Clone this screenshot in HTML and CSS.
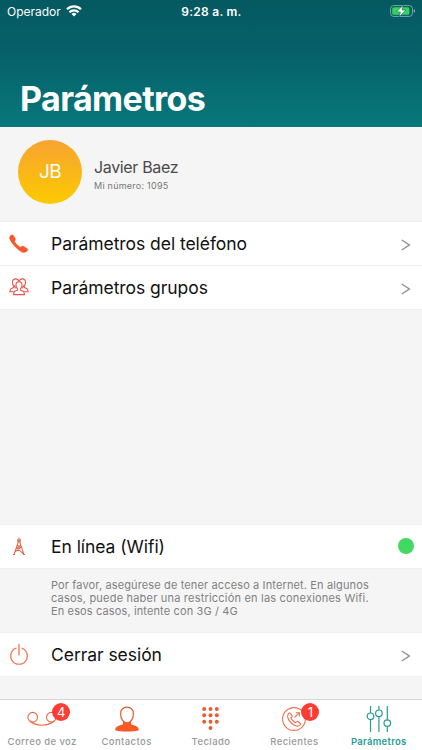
FILE: index.html
```html
<!doctype html>
<html lang="es">
  <head>
    <meta charset="UTF-8" />
    <meta name="viewport" content="width=device-width, initial-scale=1" />
    <title>Parámetros</title>
    <link rel="stylesheet" href="styles.css">
  </head>

  <body>
    <header class="header">
      <div class="status">
        <span class="carrier">
          <span class="carrier-name">Operador</span>
          <svg class="wifi" width="16" height="12" viewBox="0 0 16 12" fill="none" stroke="#fff" stroke-width="2.3">
            <path d="M1 4.3a10 10 0 0 1 14 0" />
            <path d="M3.4 7.300a6.600 6.600 0 0 1 9.200 0" />
            <path d="M8 11.500l-2.500-2.500a3.500 3.500 0 0 1 5 0z" fill="#fff" stroke="none" />
          </svg>
        </span>
        <span class="clock">9:28 a. m.</span>
        <svg class="battery" width="26" height="12" viewBox="0 0 26 12">
          <rect x=".6" y=".6" width="21.8" height="10.8" rx="3" fill="none" stroke="#78a8aa" />
          <path d="M23.7 4v4q1.5-.7 1.5-2t-1.5-2z" fill="#78a8aa" />
          <rect x="2.2" y="2.2" width="17.2" height="7.6" rx="1.5" fill="#36d35b" />
          <path d="M13.2.1L6.500 6.900h3.900L9.200 11.900l6.700-6.900h-3.900z" fill="#fff" stroke="#08636a" stroke-width=".6" />
        </svg>
      </div>
      <h1 class="title">Parámetros</h1>
    </header>

    <main class="content">
      <section class="profile">
        <div class="avatar">JB</div>
        <div>
          <div class="name">Javier Baez</div>
          <div class="number">Mi número: 1095</div>
        </div>
      </section>

      <div class="row">
        <svg class="row-icon" width="20" height="20" viewBox="0 0 20 20">
          <path d="M1 2.200Q2 .8 3.300.9q.8 0 1.500 1.100l1.500 2.700q.5 1-.3 1.900l-.6.8q2.200 3.600 5.900 5.900l1.300-.9q.8-.6 1.700-.1l3.800 2.300q1.200.8.5 1.800-1.500 2.200-4 2.100Q12 18.300 6.400 12.900 1.300 7.700.6 4.200.5 3 1 2.200z" fill="#f4582b" stroke="#f4582b" stroke-width=".5" />
        </svg>
        <span class="label">Parámetros del teléfono</span>
        <svg class="chevron" width="10" height="12" viewBox="0 0 10 12"><path d="M.8 1l7.500 5-7.500 5" /></svg>
      </div>
      <div class="row row-groups">
        <svg class="row-icon" width="20" height="18" viewBox="0 0 20 18" fill="none" stroke="#ec5148" stroke-width="1.100">
          <path d="M10 3.700c2.100 0 3.100 1.500 3 3.300 0 1.800-.7 3-1.500 3.800v1.400l2.800 1.100q1 .6 1.100 3.300H4.600q.1-2.700 1.100-3.300l2.800-1.100v-1.400C7.700 10 7 8.800 7 7c-.1-1.800.9-3.300 3-3.300z" />
          <path d="M9.800 3.500C9.300 1.700 8.200.9 6.700.9 4.500.9 3.400 2.400 3.500 4.500c0 1.600.5 2.700 1.200 3.500v1.500l-2.600 1.200q-1.100.6-1.200 3h3.800M5.500 7.300q.1 2.200 1.600 3.100" />
          <path d="M10.200 3.500C10.700 1.700 11.800.9 13.300.9c2.200 0 3.300 1.500 3.200 3.600 0 1.600-.5 2.700-1.200 3.500v1.500l2.600 1.200q1.100.6 1.200 3h-3.800M14.500 7.300q-.1 2.200-1.600 3.100" />
        </svg>
        <span class="label">Parámetros grupos</span>
        <svg class="chevron" width="10" height="12" viewBox="0 0 10 12"><path d="M.8 1l7.500 5-7.500 5" /></svg>
      </div>

      <div class="row row-online">
        <svg class="row-icon" width="20" height="20" viewBox="0 0 20 20" fill="none" stroke="#dc684c" stroke-width="1.100">
          <path d="M10 .5v4.500M8.700 2.200v2.300M11.300 2.200v2.300M8.900 4.900h2.200M9.300 4.900L5.100 17.500M10.700 4.900L14.900 17.500M4 17.500h2M14 17.500h2M8.300 8.300l3.500 2-5.800 4.500M11.600 8.300l-3.600 3L14.600 16.800" />
        </svg>
        <span class="label">En línea (Wifi)</span>
        <span class="online-dot"></span>
      </div>
      <p class="hint">
        Por favor, asegúrese de tener acceso a Internet. En algunos<br />
        <span class="hint-wide">casos, puede haber una restricción en las conexiones Wifi.</span><br />
        En esos casos, intente con 3G / 4G
      </p>
      <div class="row row-logout">
        <svg class="row-icon power" width="20" height="22" viewBox="0 0 20 22" fill="none" stroke="#ee7653" stroke-width="1.300">
          <path d="M7.500 5a8.300 8.300 0 1 0 5 0M10 1v11.500" />
        </svg>
        <span class="label">Cerrar sesión</span>
        <svg class="chevron" width="10" height="12" viewBox="0 0 10 12"><path d="M.8 1l7.500 5-7.500 5" /></svg>
      </div>
    </main>

    <nav class="tabs">
      <a class="tab">
        <span class="tab-icon">
          <svg width="30" height="28" viewBox="0 0 30 28" fill="none" stroke="#ee6844" stroke-width="1.100">
            <circle cx="5.700" cy="12.200" r="4.800" />
            <circle cx="24.300" cy="12.200" r="4.800" />
            <path d="M2.800 16q5 4.200 12.200 4.200T27.200 16" />
          </svg>
          <span class="badge badge-voice">4</span>
        </span>
        <span class="tab-label">Correo de voz</span>
      </a>
      <a class="tab">
        <span class="tab-icon">
          <svg width="26" height="28" viewBox="0 0 26 28" fill="none" stroke="#ed5b2d" stroke-width="1.200">
            <path d="M13 2.200c4 0 6.600 2.600 6.400 6.700-.1 4.900-2.700 9-6.400 9s-6.300-4.100-6.400-9C6.400 4.800 9 2.200 13 2.200z" />
            <path d="M9.500 16.500v3.300l-5.300 1.700q-2.400.8-2.500 3.200 2.400 1.300 11.300 1.300t11.300-1.300q-.1-2.400-2.500-3.200l-5.300-1.700v-3.300q-1.500 1.900-3.500 1.900t-3.500-1.900z" fill="#fa5922" />
          </svg>
        </span>
        <span class="tab-label">Contactos</span>
      </a>
      <a class="tab">
        <span class="tab-icon">
          <svg width="18" height="28" viewBox="0 0 18 28" fill="#e75c32">
            <circle cx="2.200" cy="4" r="1.950" /><circle cx="8.500" cy="4" r="1.950" /><circle cx="14.800" cy="4" r="1.950" />
            <circle cx="2.200" cy="10.300" r="1.950" /><circle cx="8.500" cy="10.300" r="1.950" /><circle cx="14.800" cy="10.300" r="1.950" />
            <circle cx="2.200" cy="16.700" r="1.950" /><circle cx="8.500" cy="16.700" r="1.950" /><circle cx="14.800" cy="16.700" r="1.950" />
            <circle cx="8.500" cy="23" r="1.950" />
          </svg>
        </span>
        <span class="tab-label">Teclado</span>
      </a>
      <a class="tab tab-recent">
        <span class="tab-icon">
          <svg width="26" height="28" viewBox="0 0 26 28" fill="none" stroke="#ed704c" stroke-width="1.100">
            <circle cx="13" cy="14" r="11.400" />
            <path d="M7 9.500q1.500-2.200 2.600-1.200l1.500 2.300q.6 1-.4 1.700l-.8.700q1.300 3 4.500 4.700l1-.8q.9-.7 1.700-.1l2.200 1.700q.9.8-.2 1.600-2.100 1.800-5 .4-4.200-2-6.500-5.900-1.600-2.800-.6-5.100zM13.500 12.700l4.800-5M14.800 7.700h3.600v3.600" />
          </svg>
          <span class="badge badge-recent">1</span>
        </span>
        <span class="tab-label">Recientes</span>
      </a>
      <a class="tab tab-active">
        <span class="tab-icon">
          <svg width="26" height="28" viewBox="0 0 26 28" fill="none" stroke="#279b94" stroke-width="1.200">
            <path d="M4.500 1v7M4.500 14.600V27M12.900 1v4M12.900 11.600V27M21.300 1v13.800M21.300 21.400V27" />
            <circle cx="4.500" cy="11.300" r="3.300" />
            <circle cx="12.900" cy="8.300" r="3.300" />
            <circle cx="21.300" cy="18.100" r="3.300" />
          </svg>
        </span>
        <span class="tab-label">Parámetros</span>
      </a>
    </nav>
  </body>
</html>
```

FILE: styles.css
```css
* {
  box-sizing: border-box;
}

body {
  margin: 0;
  height: 750px;
  display: flex;
  flex-direction: column;
  overflow: hidden;
  background: #f5f5f5;
  font-family: Inter, "Liberation Sans", sans-serif;
}

.header {
  height: 127px;
  flex: none;
  color: white;
  background: linear-gradient(#055961, #06616a 43%, #07787b);
}

.status {
  height: 22px;
  padding: 0 6px 0 7px;
  display: grid;
  grid-template-columns: 1fr auto 1fr;
  align-items: center;
  font-size: 12px;
}

.carrier {
  display: flex;
  align-items: center;
  gap: 5px;
}

.wifi {
  margin-top: -1px;
}

.clock {
  font-weight: 600;
  letter-spacing: 0.25px;
}

.battery {
  justify-self: end;
  margin-top: -1px;
}

.title {
  margin: 56px 0 0 20px;
  font-size: 34px;
  line-height: 42px;
  font-weight: 700;
  letter-spacing: -0.6px;
}

.content {
  flex: 1;
  display: flex;
  flex-direction: column;
}

.profile {
  height: 95px;
  padding: 0 0 5px 18px;
  display: flex;
  align-items: center;
  gap: 12px;
  border-bottom: 1px solid #efefef;
}

.avatar {
  width: 64px;
  height: 64px;
  border-radius: 50%;
  display: flex;
  align-items: center;
  justify-content: center;
  color: white;
  font-size: 19px;
  letter-spacing: -0.7px;
  background: linear-gradient(#f7a331, #fcca00);
}

.name {
  margin-top: 6px;
  font-size: 16px;
  line-height: 20px;
  letter-spacing: -0.35px;
  color: #4a4a4a;
}

.number {
  margin-top: 2px;
  font-size: 9px;
  line-height: 14px;
  letter-spacing: 0.25px;
  color: #777;
}

.row {
  height: 43px;
  padding: 0 11px 0 9px;
  display: flex;
  align-items: center;
  background: white;
  flex: none;
}

.row-groups {
  height: 45px;
  border-top: 1px solid #f0f0f0;
  border-bottom: 1px solid #efefef;
}

.row-groups .row-icon {
  margin-top: -2px;
}

.row-online {
  margin-top: auto;
  height: 45px;
  padding-right: 8px;
  border: 1px solid #efefef;
  border-width: 1px 0;
}

.row-logout {
  height: 45px;
  margin-bottom: 22px;
  border: 1px solid #efefef;
  border-width: 1px 0;
}

.row-icon {
  margin-right: 22px;
}

.power {
  margin-top: -2px;
}

.label {
  flex: 1;
  font-size: 17.5px;
  line-height: 22px;
  letter-spacing: -0.05px;
  color: #111;
  white-space: nowrap;
}

.chevron {
  margin-top: 2px;
  fill: none;
  stroke: #919195;
  stroke-width: 1.5;
}

.online-dot {
  width: 16px;
  height: 16px;
  margin-top: -2px;
  border-radius: 50%;
  background: #43d860;
}

.hint {
  height: 63px;
  margin: 0;
  padding: 10px 0 0 51px;
  font-size: 11px;
  line-height: 13.2px;
  letter-spacing: 0.13px;
  color: #818181;
  white-space: nowrap;
}

.hint-wide {
  letter-spacing: 0.2px;
}

.tabs {
  height: 51px;
  flex: none;
  display: flex;
  border-top: 1px solid #d7d7d7;
  background: white;
}

.tab {
  flex: none;
  width: 20%;
  display: flex;
  flex-direction: column;
  align-items: center;
  color: #999;
}

.tab-recent,
.tab-active {
  padding-right: 2px;
}

.tab-active {
  color: #279b94;
}

.tab-icon {
  position: relative;
  height: 28px;
  margin-top: 5px;
}

.tab-icon svg {
  display: block;
}

.badge {
  position: absolute;
  top: -2px;
  width: 18px;
  height: 18px;
  border-radius: 50%;
  color: white;
  background: #fc3d35;
  font-size: 13px;
  line-height: 18px;
  text-align: center;
}

.badge-voice {
  left: 25px;
}

.badge-recent {
  left: 20px;
}

.tab-label {
  margin-top: 2px;
  font-size: 9.5px;
  line-height: 13px;
  letter-spacing: 0.4px;
  font-weight: 500;
  white-space: nowrap;
}

.tab-active .tab-label {
  font-weight: 600;
  letter-spacing: 0.3px;
}
```
